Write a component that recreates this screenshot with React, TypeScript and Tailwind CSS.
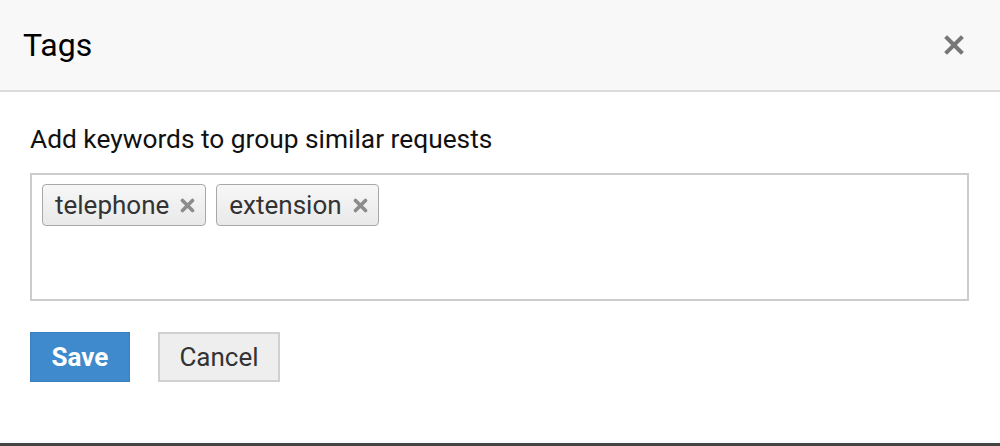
import React from "react";

const tags = ["telephone", "extension"];

function CloseIcon() {
  return (
    <svg width="20" height="20" viewBox="0 0 20 20" className="block">
      <path d="M3 3 L17 17 M17 3 L3 17" stroke="#777" strokeWidth="4" strokeLinecap="square" />
    </svg>
  );
}

function ChipX() {
  return (
    <svg width="15" height="15" viewBox="0 0 15 15" className="block">
      <path d="M2.5 2.5 L12.5 12.5 M12.5 2.5 L2.5 12.5" stroke="#8c8c8c" strokeWidth="3.6" strokeLinecap="round" />
    </svg>
  );
}

export default function App() {
  return (
    <div
      className="w-[1000px] h-[446px] bg-white flex flex-col border-b-[3px] border-[#444]"
      style={{ fontFamily: "Roboto, 'Liberation Sans', sans-serif" }}
    >
      <div className="h-[92px] shrink-0 bg-[#f8f8f8] border-b-2 border-[#dcdcdc] pl-[23px] pr-[36px] flex items-center justify-between">
        <h1 className="text-[32px] leading-none text-black">Tags</h1>
        <button className="p-0">
          <CloseIcon />
        </button>
      </div>

      <div className="px-[30px] pt-[32px]">
        <p className="text-[26.3px] leading-[30px] text-[#111]">Add keywords to group similar requests</p>

        <div className="mt-[19px] w-[939px] h-[128px] border-2 border-[#cccccc] pt-[9px] pl-[10px] flex items-start gap-[10px]">
          {tags.map((tag) => (
            <span
              key={tag}
              className="h-[42px] flex items-center gap-[11px] pl-[12px] pr-[10px] border border-[#a8a8a8] rounded-[4px] bg-gradient-to-b from-[#f7f7f7] to-[#e9e9e9] text-[26px] leading-none text-[#333]"
            >
              {tag}
              <ChipX />
            </span>
          ))}
        </div>

        <div className="mt-[31px] flex gap-[28px]">
          <button className="w-[100px] h-[50px] bg-[#3e8acc] border border-[#3a7fbd] text-white text-[26px] font-bold">
            Save
          </button>
          <button className="w-[122px] h-[50px] bg-[#eeeeee] border-2 border-[#d0d0d0] text-[#333] text-[26px]">
            Cancel
          </button>
        </div>
      </div>
    </div>
  );
}
